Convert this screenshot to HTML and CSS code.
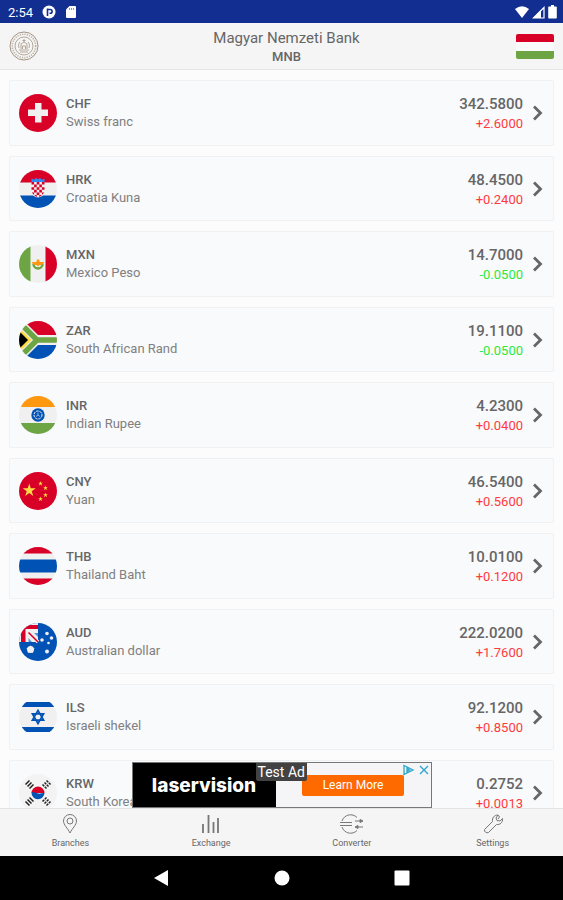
FILE: index.html
```
<!DOCTYPE html>
<html lang="en">

<head>
    <meta charset="UTF-8">
    <meta name="viewport" content="width=device-width, initial-scale=1.0">
    <link rel="stylesheet" href="styles.css">
    <title>Exchange rates</title>
</head>

<body>
    <div class="status-bar">
        <span class="clock">2:54</span>
        <svg width="14" height="14" viewBox="0 0 14 14"><circle cx="7" cy="7" r="6.500" fill="#fff"/><path d="M5.500 11V3.500M5.500 4.500h2.700a1.900 1.900 0 0 1 0 3.800H7.500" fill="none" stroke="#132e91" stroke-width="1.600"/></svg>
        <svg width="12" height="14" viewBox="0 0 12 14"><path d="M4.500 1H10a1 1 0 0 1 1 1v10a1 1 0 0 1-1 1H2a1 1 0 0 1-1-1V4.500z" fill="#fff"/><path d="M4.500 3v2M6.500 3v2M8.500 3v2" stroke="#132e91" stroke-width=".5"/></svg>
        <span class="status-right">
            <svg width="14" height="12" viewBox="0 0 14 12"><path d="M0 3Q7-2.500 14 3L7 12z" fill="#fff"/></svg>
            <svg width="13" height="13" viewBox="0 0 13 13"><path d="M1.500 12L12 1.500V12z" fill="none" stroke="#fff" stroke-width="1.200"/><path d="M1 12L9 4v8z" fill="#fff"/></svg>
            <svg width="9" height="14" viewBox="0 0 9 14"><path d="M3 0h3v1.500h2a.8.800 0 0 1 .8.800v10.500a.8.800 0 0 1-.8.800H1a.8.800 0 0 1-.8-.8V2.300A.8.800 0 0 1 1 1.500h2z" fill="#fff"/></svg>
        </span>
    </div>

    <header class="header">
        <svg class="seal" width="30" height="30" viewBox="0 0 30 30" fill="none" stroke="#a39482">
            <circle cx="15" cy="15" r="14" stroke-width="1"/>
            <circle cx="15" cy="15" r="11.700" stroke-width="1.600" stroke-dasharray="1.200 1.200" opacity=".7"/>
            <circle cx="15" cy="15" r="9" stroke-width=".8"/>
            <path d="M10 19h10M11 21h8M12 18v-5l3-2 3 2v5M13.500 18v-3h3v3M15 11V8M13.500 9.500h3M10 17c-1-3 0-5 1-6M20 17c1-3 0-5-1-6" stroke-width=".8"/>
        </svg>
        <div class="title">
            <h1>Magyar Nemzeti Bank</h1>
            <h2>MNB</h2>
        </div>
        <svg class="country" width="38" height="25" viewBox="0 0 38 25">
            <path d="M0 8V2a2 2 0 0 1 2-2h34a2 2 0 0 1 2 2v6z" fill="#d80027"/>
            <path d="M0 8h38v9H0z" fill="#fafafa"/>
            <path d="M0 17h38v6a2 2 0 0 1-2 2H2a2 2 0 0 1-2-2z" fill="#6da544"/>
        </svg>
    </header>

    <!-- shared clip and chevron -->
    <svg class="defs" width="0" height="0">
        <defs>
            <clipPath id="round"><circle cx="19" cy="19" r="19"/></clipPath>
            <symbol id="chevron" viewBox="0 0 12 18"><path d="M2 2.500L8.500 9 2 15.500" fill="none" stroke="#666" stroke-width="2.800"/></symbol>
            <symbol id="star" viewBox="0 0 20 20"><path d="M10 0l2.300 7h7.400l-6 4.400 2.300 7.100-6-4.400-6 4.400 2.300-7.100-6-4.400h7.400z"/></symbol>
        </defs>
    </svg>

    <main class="content">
        <ul class="rates">
            <li>
                <a href="#chf" class="card">
                    <svg class="flag" viewBox="0 0 38 38"><circle cx="19" cy="19" r="19" fill="#d80027"/><path d="M16 9h6.500v6.500H29V22h-6.500v6.500H16V22H9v-6.500h7z" fill="#f0f0f0"/></svg>
                    <span class="currency"><b>CHF</b><span>Swiss franc</span></span>
                    <span class="rate"><b>342.5800</b><span class="up">+2.6000</span></span>
                    <svg class="chevron"><use href="#chevron"/></svg>
                </a>
            </li>
            <li>
                <a href="#hrk" class="card">
                    <svg class="flag" viewBox="0 0 38 38"><g clip-path="url(#round)"><path d="M0 0h38v38H0z" fill="#f0f0f0"/><path d="M0 0h38v12.500H0z" fill="#d80027"/><path d="M0 25.500h38V38H0z" fill="#0052b4"/><path d="M12.500 12V8.500l2.500 1.200L17 8l2 1.500L21 8l2 1.700 2.500-1.200V12z" fill="#338af3"/><path d="M12.500 12h13v9.500a6.500 6 0 0 1-13 0z" fill="#f0f0f0"/><path d="M12.500 12h2.600v2.600h-2.600zM17.700 12h2.600v2.600h-2.600zM22.900 12h2.600v2.600h-2.600zM15.100 14.600h2.600v2.600h-2.600zM20.300 14.600h2.600v2.600h-2.600zM12.500 17.200h2.600v2.600h-2.600zM17.700 17.200h2.600v2.600h-2.600zM22.900 17.200h2.600v2.600h-2.600zM15.100 19.800h2.600v2.600h-2.600zM20.300 19.800h2.600v2.600h-2.600zM12.700 22.400h2.400V25zM17.700 22.400h2.600V25h-2.600zM22.900 22.400h2.400L22.900 25zM15.100 25h2.600v2.200zM20.300 25h2.600l-2.600 2.200z" fill="#d80027"/></g></svg>
                    <span class="currency"><b>HRK</b><span>Croatia Kuna</span></span>
                    <span class="rate"><b>48.4500</b><span class="up">+0.2400</span></span>
                    <svg class="chevron"><use href="#chevron"/></svg>
                </a>
            </li>
            <li>
                <a href="#mxn" class="card">
                    <svg class="flag" viewBox="0 0 38 38"><g clip-path="url(#round)"><path d="M0 0h38v38H0z" fill="#f0f0f0"/><path d="M0 0h11.500v38H0z" fill="#6da544"/><path d="M26.500 0H38v38H26.500z" fill="#d80027"/></g><path d="M14.500 19a4.500 4.500 0 0 0 9 0" fill="none" stroke="#6da544" stroke-width="2.500"/><path d="M13 17h4.500v-1.500L19 14l1.500 1.500V17H25c0 2-1.500 2.500-3 3h-1.500L19 21.500 17.500 20H16c-1.500-.5-3-1-3-3z" fill="#ff9811"/></svg>
                    <span class="currency"><b>MXN</b><span>Mexico Peso</span></span>
                    <span class="rate"><b>14.7000</b><span class="down">-0.0500</span></span>
                    <svg class="chevron"><use href="#chevron"/></svg>
                </a>
            </li>
            <li>
                <a href="#zar" class="card">
                    <svg class="flag" viewBox="0 0 38 38"><g clip-path="url(#round)"><path d="M0 0h38v38H0z" fill="#f0f0f0"/><path d="M5 0h33v14H19z" fill="#d80027"/><path d="M5 38h33V24H19z" fill="#0052b4"/><path d="M-1 5L15 19-1 33M14 19h25" fill="none" stroke="#f0f0f0" stroke-width="9"/><path d="M2 3L18 19 2 35M17 19h22" fill="none" stroke="#6da544" stroke-width="5.500"/><path d="M0 6.500L12.500 19 0 31.500z" fill="#ffda44"/><path d="M0 10l9 9-9 9z" fill="#000"/></g></svg>
                    <span class="currency"><b>ZAR</b><span>South African Rand</span></span>
                    <span class="rate"><b>19.1100</b><span class="down">-0.0500</span></span>
                    <svg class="chevron"><use href="#chevron"/></svg>
                </a>
            </li>
            <li>
                <a href="#inr" class="card">
                    <svg class="flag" viewBox="0 0 38 38"><g clip-path="url(#round)"><path d="M0 0h38v38H0z" fill="#f0f0f0"/><path d="M0 0h38v11H0z" fill="#ff9811"/><path d="M0 27h38v11H0z" fill="#6da544"/></g><circle cx="19" cy="19" r="6.700" fill="#0052b4"/><circle cx="19" cy="19" r="4" fill="none" stroke="#f0f0f0" stroke-width="1" stroke-dasharray="2.500 .8"/><path d="M19 16.500v2.500l-2 1.500M19 19l2 1.500" fill="none" stroke="#8fb2dc"/></svg>
                    <span class="currency"><b>INR</b><span>Indian Rupee</span></span>
                    <span class="rate"><b>4.2300</b><span class="up">+0.0400</span></span>
                    <svg class="chevron"><use href="#chevron"/></svg>
                </a>
            </li>
            <li>
                <a href="#cny" class="card">
                    <svg class="flag" viewBox="0 0 38 38" fill="#ffda44"><circle cx="19" cy="19" r="19" fill="#d80027"/><use href="#star" x="3.500" y="11.500" width="13.500" height="13.500"/><use href="#star" x="19" y="9" width="5" height="5"/><use href="#star" x="24" y="13.500" width="5" height="5"/><use href="#star" x="24" y="20.500" width="5" height="5"/><use href="#star" x="19" y="24.500" width="5" height="5"/></svg>
                    <span class="currency"><b>CNY</b><span>Yuan</span></span>
                    <span class="rate"><b>46.5400</b><span class="up">+0.5600</span></span>
                    <svg class="chevron"><use href="#chevron"/></svg>
                </a>
            </li>
            <li>
                <a href="#thb" class="card">
                    <svg class="flag" viewBox="0 0 38 38"><g clip-path="url(#round)"><path d="M0 0h38v38H0z" fill="#f0f0f0"/><path d="M0 0h38v6.500H0zM0 31.500h38V38H0z" fill="#d80027"/><path d="M0 12.500h38v13H0z" fill="#0052b4"/></g></svg>
                    <span class="currency"><b>THB</b><span>Thailand Baht</span></span>
                    <span class="rate"><b>10.0100</b><span class="up">+0.1200</span></span>
                    <svg class="chevron"><use href="#chevron"/></svg>
                </a>
            </li>
            <li>
                <a href="#aud" class="card">
                    <svg class="flag" viewBox="0 0 38 38" fill="#f0f0f0"><g clip-path="url(#round)"><path d="M0 0h38v38H0z" fill="#0052b4"/><path d="M0 0h19v19H0z"/><path d="M2 2h17v4H6.500v13H2z" fill="#d80027"/><path d="M12 13.500V19h-3V9l10 0v3h-5.500z" fill="#f0f0f0"/><path d="M9.500 15v4h3.500zM15 10h4v4z" fill="#0052b4" opacity=".6"/><path d="M9 9l10 10" stroke="#f0f0f0" stroke-width="3.500"/><path d="M9.500 9.500L19 19" stroke="#d80027" stroke-width="1.600"/></g><use href="#star" x="7" y="22" width="9" height="9"/><circle cx="11.500" cy="26.500" r="3.500"/><circle cx="28" cy="10.500" r="1.800"/><circle cx="23" cy="17" r="1.800"/><circle cx="32.500" cy="15" r="1.800"/><circle cx="29.500" cy="20" r="1.300"/><circle cx="28" cy="28.500" r="2"/></svg>
                    <span class="currency"><b>AUD</b><span>Australian dollar</span></span>
                    <span class="rate"><b>222.0200</b><span class="up">+1.7600</span></span>
                    <svg class="chevron"><use href="#chevron"/></svg>
                </a>
            </li>
            <li>
                <a href="#ils" class="card">
                    <svg class="flag" viewBox="0 0 38 38"><g clip-path="url(#round)"><path d="M0 0h38v38H0z" fill="#f0f0f0"/><path d="M0 0h38v4H0zM0 34h38v4H0z" fill="#f9fafc"/><path d="M0 4h38v5H0zM0 29h38v5H0z" fill="#0052b4"/></g><path d="M19 12.500l5.600 9.700H13.400zM19 25.500l-5.600-9.700h11.200z" fill="none" stroke="#0052b4" stroke-width="1.700"/></svg>
                    <span class="currency"><b>ILS</b><span>Israeli shekel</span></span>
                    <span class="rate"><b>92.1200</b><span class="up">+0.8500</span></span>
                    <svg class="chevron"><use href="#chevron"/></svg>
                </a>
            </li>
            <li>
                <a href="#krw" class="card">
                    <svg class="flag" viewBox="0 0 38 38"><circle cx="19" cy="19" r="19" fill="#f3f3f3"/><path d="M12.500 19a6.500 6.500 0 0 1 13 0z" fill="#d80027"/><path d="M12.500 18.500a6.500 6.500 0 0 0 13 .5c-3 0-4 1-6.500.5s-4-1.500-6.500-1z" fill="#0052b4"/><g fill="none" stroke="#222" stroke-width="1.500"><path d="M6.500 10.500l4-4M8.500 12.500l4-4M10.500 14.500l4-4M6.500 27.500l4 4M8.500 25.500l4 4M10.500 23.500l4 4"/><path d="M27.500 6.500l4 4M25.500 8.500l4 4M23.500 10.500l4 4M27.500 31.500l4-4M25.500 29.500l4-4M23.500 27.500l4-4" stroke-dasharray="2.500 .8"/></g></svg>
                    <span class="currency"><b>KRW</b><span>South Korean won</span></span>
                    <span class="rate"><b>0.2752</b><span class="up">+0.0013</span></span>
                    <svg class="chevron"><use href="#chevron"/></svg>
                </a>
            </li>
        </ul>

        <aside class="ad">
            <div class="ad-brand">laservision</div>
            <div class="ad-action"><a href="#ad">Learn More</a></div>
            <span class="ad-label">Test Ad</span>
            <svg class="ad-choices" width="28" height="12" viewBox="0 0 28 12" fill="none" stroke="#2aa5cb" stroke-width="1.300"><path d="M2 1.500v9L11 6zM5 4.500v3l2.500-1.500z"/><path d="M18 2l8 8M26 2l-8 8"/></svg>
        </aside>
    </main>

    <nav class="tabs">
        <a href="#branches">
            <svg width="24" height="20" viewBox="0 0 24 20"><path d="M12 19C10 14.500 5.500 11 5.500 7a6.500 6.500 0 0 1 13 0c0 4-4.500 7.500-6.500 12z"/><circle cx="12" cy="7" r="3"/></svg>
            Branches
        </a>
        <a href="#exchange">
            <svg width="24" height="20" viewBox="0 0 24 20"><path d="M4 10v9M9.500 1v18M14.500 8v11M19 4v15" stroke-width="1.800"/></svg>
            Exchange
        </a>
        <a href="#converter">
            <svg width="26" height="20" viewBox="0 0 26 20"><path d="M18 3.500A9 9 0 0 0 3 7M3 13a9 9 0 0 0 15 3.500M1 8.500h12M1 11.500h12M16 7h6M24 13h-6"/><path d="M21 5.500L24 7l-3 1.500zM19 11.500L16 13l3 1.500z" fill="#777"/></svg>
            Converter
        </a>
        <a href="#settings">
            <svg width="24" height="20" viewBox="0 0 24 20"><path d="M3.500 15.500l8-8C11 4 13 1 17 1l-2 3 1 2.500 3 .5 2.500-2.500c.5 4-2.500 6.500-6 6l-8 8a2.800 2.800 0 0 1-4-3zM17 1l1.500 2-1.500 2"/></svg>
            Settings
        </a>
    </nav>

    <div class="system-bar">
        <button type="button" aria-label="Back"><svg width="16" height="16" viewBox="0 0 16 16"><path d="M0 8l14-8v16z"/></svg></button>
        <button type="button" aria-label="Home"><svg width="16" height="16" viewBox="0 0 16 16"><circle cx="8" cy="8" r="7.500"/></svg></button>
        <button type="button" aria-label="Recent apps"><svg width="16" height="16" viewBox="0 0 16 16"><rect x="0.500" y="0.500" width="15" height="15" rx="1"/></svg></button>
    </div>
</body>

</html>
```
FILE: styles.css
```
* {
    box-sizing: border-box;
}

body {
    margin: 0;
    height: 100vh;
    display: flex;
    flex-direction: column;
    font-family: Roboto, "Liberation Sans", sans-serif;
    color: #666;
    background-color: #fcfcfc;
}

a {
    color: inherit;
    text-decoration: none;
}

svg {
    display: block;
    flex: none;
}

.defs {
    position: absolute;
}

/* Android status bar */
.status-bar {
    display: flex;
    align-items: center;
    gap: 9px;
    height: 23px;
    flex: none;
    padding: 1px 6px 0 8px;
    background-color: #132e91;
    color: white;
}

.clock {
    font-size: 13px;
}

.status-right {
    display: flex;
    align-items: center;
    gap: 3px;
    margin-left: auto;
}

.header {
    display: flex;
    align-items: center;
    height: 47px;
    flex: none;
    padding: 0 9px;
    background-color: #f5f5f5;
    border-bottom: 1px solid #e4e4e4;
}

.title {
    flex: 1;
    padding: 2px 0 0 18px;
    text-align: center;
}

.title h1 {
    margin: 0;
    font-size: 15px;
    font-weight: 400;
    line-height: 18px;
}

.title h2 {
    margin: 0;
    font-size: 13px;
    font-weight: 500;
    line-height: 19px;
}

/* Rate list */
.content {
    position: relative;
    flex: 1;
    min-height: 0;
    overflow: hidden;
}

.rates {
    display: flex;
    flex-direction: column;
    gap: 10px;
    margin: 0;
    padding: 10px 9px;
    list-style: none;
}

.card {
    display: flex;
    align-items: center;
    height: 66px;
    padding: 0 9px;
    background-color: #f9fafc;
    border: 1px solid #eff1f2;
    border-radius: 2px;
}

.rates li:nth-child(even) .card {
    height: 65px;
}

.flag {
    width: 38px;
    height: 38px;
}

.currency,
.rate {
    display: flex;
    flex-direction: column;
    font-size: 13px;
    line-height: 18px;
}

.currency {
    margin-left: 9px;
}

.currency span {
    color: #808080;
}

.rate {
    margin-left: auto;
    padding-top: 2px;
    text-align: right;
    line-height: 19px;
}

.currency b,
.rate b {
    font-weight: 500;
}

.rate b {
    font-size: 15px;
}

.up {
    color: #ff3b3b;
}

.down {
    color: #2ee83a;
}

.chevron {
    width: 12px;
    height: 18px;
    margin-left: 9px;
}

/* Banner */
.ad {
    position: absolute;
    bottom: 0;
    left: 50%;
    transform: translateX(-50%);
    display: flex;
    width: 300px;
    height: 46px;
    border: 1px solid #777;
    background-color: #f5f5f7;
}

.ad-brand {
    display: flex;
    align-items: center;
    justify-content: center;
    width: 143px;
    background-color: black;
    color: white;
    font-family: Inter, sans-serif;
    font-size: 19px;
    font-weight: 800;
}

.ad-action {
    display: flex;
    flex: 1;
    align-items: center;
    justify-content: center;
}

.ad-action a {
    width: 102px;
    border-radius: 2px;
    background-color: #ff6a00;
    color: white;
    font-size: 12px;
    line-height: 21px;
    text-align: center;
}

.ad-label {
    position: absolute;
    top: 0;
    left: 123px;
    padding: 0 2px;
    border-radius: 0 0 2px 2px;
    background-color: #424242;
    color: white;
    font-size: 14px;
    line-height: 18px;
}

.ad-choices {
    position: absolute;
    top: 1px;
    right: 1px;
}

/* Bottom tabs */
.tabs {
    display: flex;
    height: 48px;
    flex: none;
    background-color: #f5f5f5;
    border-top: 1px solid #e4e4e4;
}

.tabs a {
    display: flex;
    flex: 1;
    flex-direction: column;
    align-items: center;
    padding-top: 5px;
    font-size: 9px;
    line-height: 19px;
}

.tabs svg {
    fill: none;
    stroke: #777;
    stroke-width: 1;
}

.system-bar {
    display: flex;
    align-items: center;
    justify-content: center;
    gap: 104px;
    height: 44px;
    flex: none;
    background-color: black;
}

.system-bar button {
    padding: 0;
    border: none;
    background: none;
    cursor: pointer;
}

.system-bar svg {
    fill: white;
}
```
